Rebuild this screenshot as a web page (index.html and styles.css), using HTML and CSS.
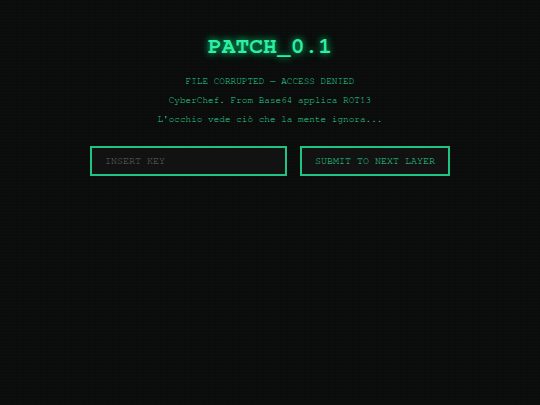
FILE: index.html
```html
<!DOCTYPE html>
<html lang="it">
<head>
<meta charset="utf-8">
<title>PATCH_0.1</title>
<link rel="stylesheet" href="styles.css">
</head>
<body>
<main class="wrap">
  <h1 class="title">PATCH_0.1</h1>
  <div class="lines">
    <p class="line">FILE CORRUPTED — ACCESS DENIED</p>
    <p class="line">CyberChef. From Base64 applica ROT13</p>
    <p class="line">L'occhio vede ciò che la mente ignora...</p>
  </div>
  <form class="form">
    <input class="key" type="text" placeholder="INSERT KEY">
    <button class="submit" type="button">SUBMIT TO NEXT LAYER</button>
  </form>
</main>
</body>
</html>
```
FILE: styles.css
```css
html, body {
  margin: 0;
  height: 100%;
}
body {
  background-color: #0b0b0b;
  background-image:
    repeating-linear-gradient(0deg, rgba(0, 255, 150, 0.012) 0 1px, transparent 1px 3px),
    repeating-linear-gradient(90deg, rgba(0, 255, 150, 0.01) 0 1px, transparent 1px 3px);
  font-family: "Nimbus Mono PS", "FreeMono", "Courier New", "Liberation Mono", monospace;
  color: #22c98a;
}
.wrap {
  display: flex;
  flex-direction: column;
  align-items: center;
  padding-top: 33px;
}
.title {
  margin: 0;
  font-size: 23px;
  line-height: 28px;
  font-weight: bold;
  color: #2ef0a2;
  text-shadow: 0 0 6px rgba(0, 255, 150, 0.7), 0 0 12px rgba(0, 255, 150, 0.35);
}
.lines {
  margin-top: 11px;
  display: flex;
  flex-direction: column;
  align-items: center;
}
.line {
  margin: 0;
  font-size: 9.4px;
  line-height: 19px;
  color: #2ad593;
}
.form {
  margin-top: 17px;
  display: flex;
  gap: 13px;
}
.key {
  box-sizing: border-box;
  width: 197px;
  height: 30px;
  margin: 0;
  padding: 0 13px;
  background: #121212;
  border: 2px solid #1fc485;
  outline: none;
  font-family: inherit;
  font-size: 10px;
  color: #2ef0a2;
}
.key::placeholder {
  color: #666;
}
.submit {
  box-sizing: border-box;
  width: 150px;
  height: 30px;
  margin: 0;
  padding: 0;
  background: #121212;
  border: 2px solid #1fc485;
  font-family: inherit;
  font-size: 10px;
  color: #2ad593;
  cursor: pointer;
}
```
